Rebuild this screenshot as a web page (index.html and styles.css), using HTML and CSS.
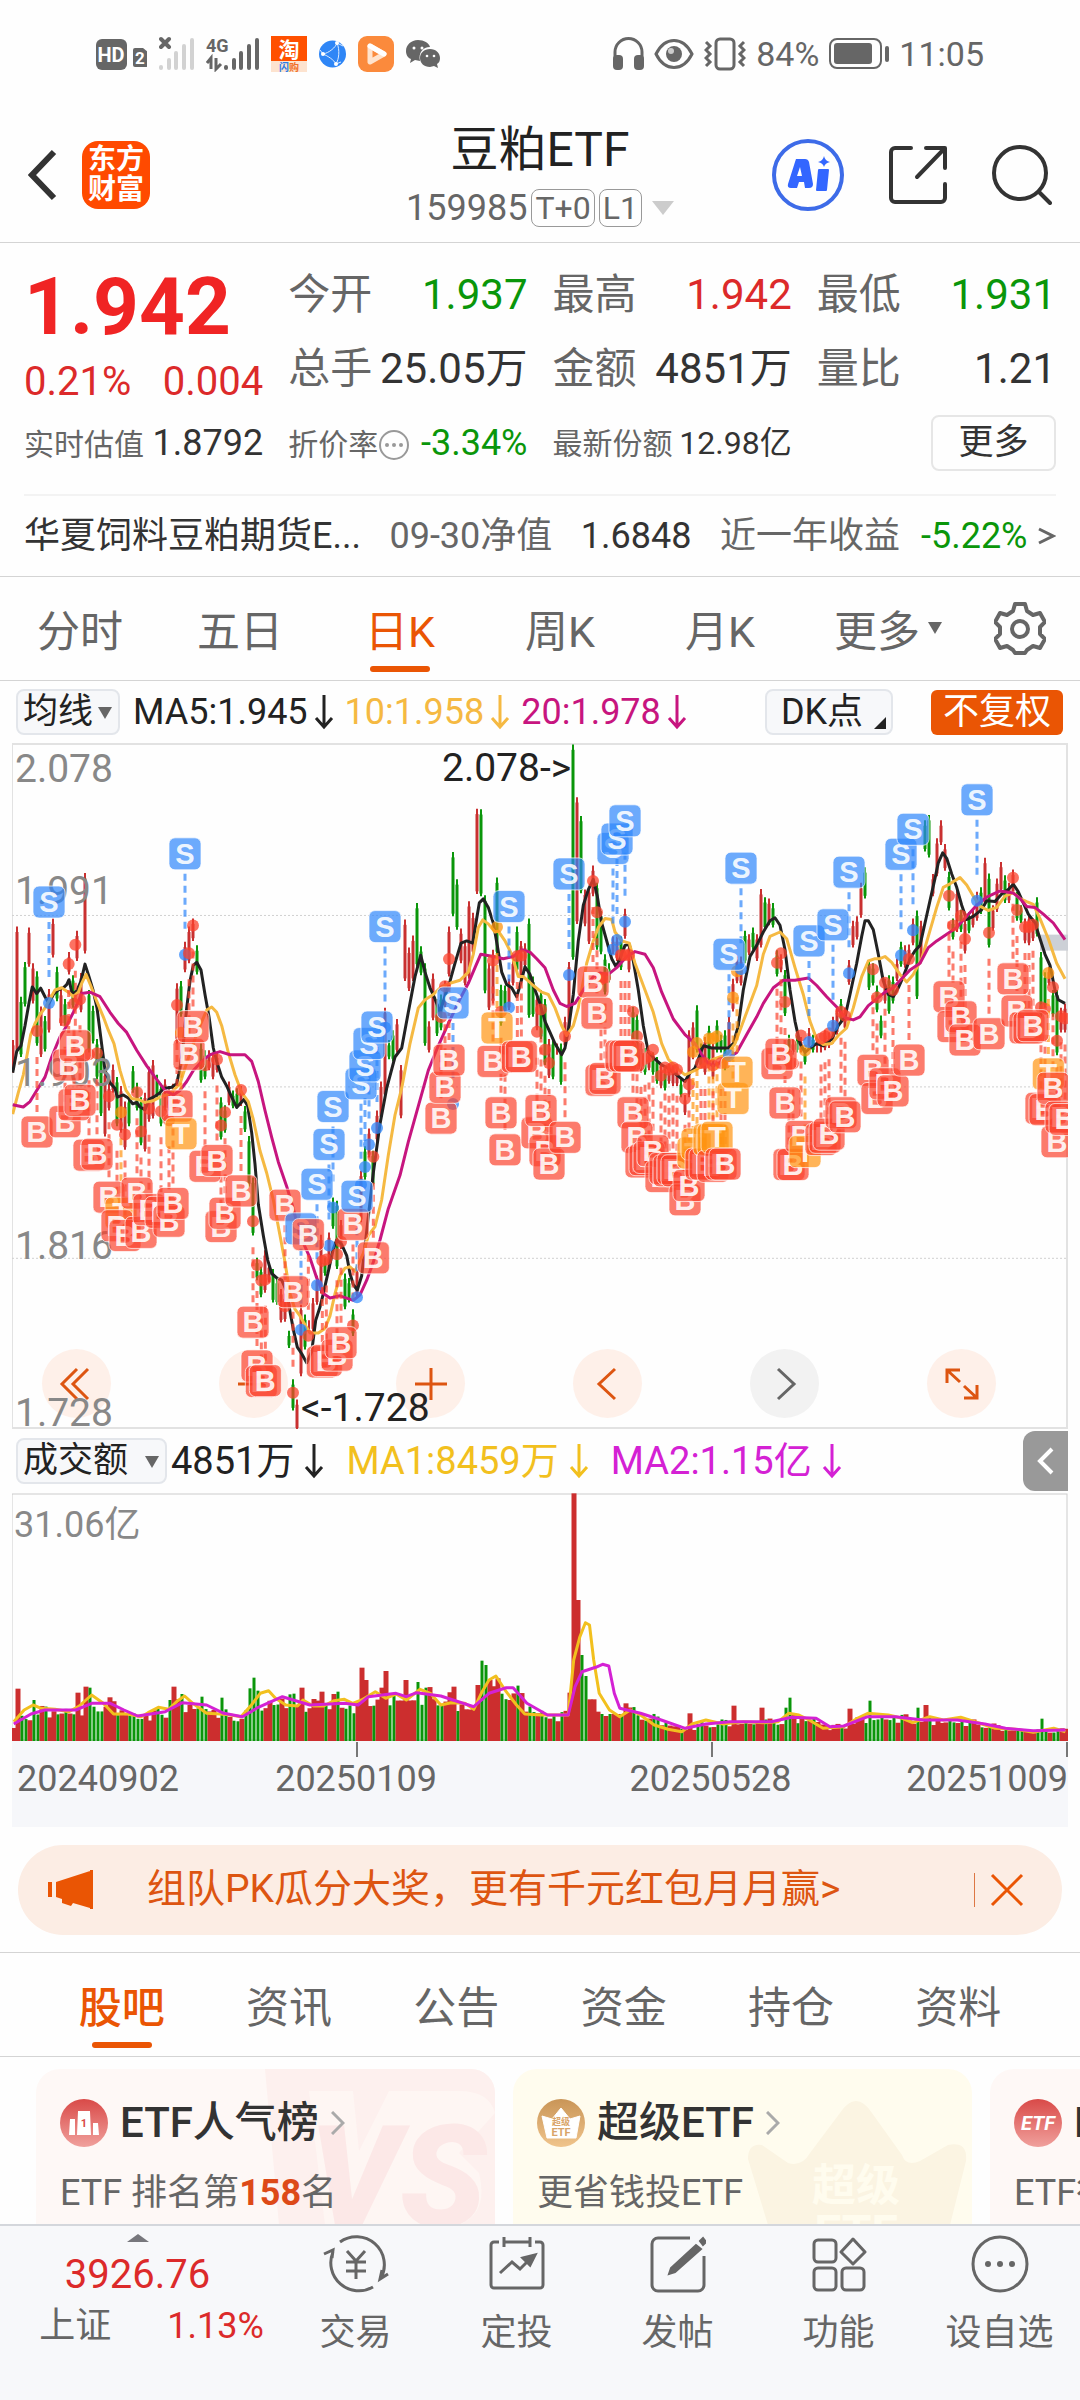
FILE: index.html
```html
<!DOCTYPE html>
<html lang="zh-CN">
<head>
    <meta charset="UTF-8">
    <meta name="viewport" content="width=device-width, initial-scale=1.0">
    <title>豆粕ETF 159985</title>
    <link rel="stylesheet" href="styles.css">
</head>
<body>
<div class="app">
    <div class="status-bar">
        <div class="status-group">
            <svg width="51" height="36" viewBox="0 0 51 36">
                <rect x="0" y="3" width="31" height="31" rx="6" fill="#666"/>
                <text x="15" y="26" text-anchor="middle" class="svg-bold" font-size="20" fill="#fff">HD</text>
                <path d="M37 14a2 2 0 0 1 2-2h8l5 4v13a2 2 0 0 1-2 2H39a2 2 0 0 1-2-2z" fill="#666"/>
                <text x="44" y="28" text-anchor="middle" class="svg-bold" font-size="17" fill="#fff">2</text>
            </svg>
            <svg width="35" height="36" viewBox="0 0 35 36" stroke-linecap="round">
                <path d="M2 3l8 8M10 3l-8 8" stroke="#666" stroke-width="4"/>
                <path d="M2 31v1M10 24v8M17 17v15M25 10v22M33 4v28" stroke="#d2d2d2" stroke-width="4"/>
            </svg>
            <svg width="53" height="36" viewBox="0 0 53 36">
                <text x="0" y="16" class="svg-bold" font-size="18" fill="#666">4G</text>
                <path d="M5 33V22l-4 5M10 22v11l5-5" stroke="#666" stroke-width="3" fill="none"/>
                <path d="M20 31v1M28 24v8M35 17v15M43 10v22M51 4v28" stroke="#666" stroke-width="4" stroke-linecap="round"/>
            </svg>
            <svg width="36" height="36" viewBox="0 0 36 36">
                <rect width="36" height="26" fill="#ff5000"/>
                <rect y="25" width="36" height="11" fill="#fde3cf"/>
                <text x="18" y="21" text-anchor="middle" class="svg-bold" font-size="21" fill="#fff">淘</text>
                <text x="8" y="35" class="svg-bold" font-size="10" fill="#2c7be5">闪</text>
                <text x="18" y="35" class="svg-bold" font-size="10" fill="#f0702a">购</text>
            </svg>
            <svg width="27" height="36" viewBox="0 0 27 36">
                <circle cx="13.500" cy="18" r="13.500" fill="#2f86f6"/>
                <path d="M4 18C10 17 17 11 18 7C21 14 20 23 17 28C15 24 9 20 4 18M18 7l6 3M17 28l5-2M4 18l-3-4" stroke="#dcebff" stroke-width="1" fill="none"/>
                <circle cx="4" cy="18" r="2" fill="#fff"/><circle cx="18" cy="7" r="2" fill="#fff"/><circle cx="17" cy="28" r="2" fill="#fff"/>
            </svg>
            <svg width="36" height="36" viewBox="0 0 36 36">
                <rect width="36" height="36" rx="9" fill="#fb8a3c"/>
                <path d="M12 10l14 8-14 8z" fill="none" stroke="#ffe3cd" stroke-width="5" stroke-linejoin="round"/>
                <path d="M12 10l14 8" stroke="#fff" stroke-width="5" stroke-linecap="round"/>
            </svg>
            <svg width="34" height="36" viewBox="0 0 34 36">
                <path d="M12 4C5 4 0 9 0 15c0 4 2 7 5 8l-1 4 5-3 5 1c-2-8 3-14 10-14C23 7 18 4 12 4z" fill="#666"/>
                <path d="M24 13c-6 0-10 4-10 9s4 9 10 9l4-1 4 2-1-4c2-1 3-3 3-6 0-5-4-9-10-9z" fill="#666"/>
                <g fill="#fff"><circle cx="8" cy="12" r="1.500"/><circle cx="16" cy="12" r="1.500"/><circle cx="21" cy="20" r="1.300"/><circle cx="28" cy="20" r="1.300"/></g>
            </svg>
        </div>
        <div class="status-group status-right">
            <svg width="31" height="36" viewBox="0 0 31 36">
                <path d="M2 26V16a13 13 0 0 1 27 0v10" stroke="#666" stroke-width="3" fill="none"/>
                <rect x="0" y="19" width="10" height="15" rx="4" fill="#666"/><rect x="21" y="19" width="10" height="15" rx="4" fill="#666"/>
            </svg>
            <svg width="40" height="36" viewBox="0 0 40 36">
                <path d="M2 18C11 0 29 0 38 18C29 36 11 36 2 18z" fill="none" stroke="#666" stroke-width="3"/>
                <circle cx="20" cy="18" r="8" fill="#666"/><circle cx="17" cy="15" r="3" fill="#ccc"/>
            </svg>
            <svg width="42" height="36" viewBox="0 0 42 36" fill="none" stroke="#666" stroke-width="3">
                <rect x="12" y="3" width="18" height="30" rx="4"/>
                <path d="M2 6l4 4-4 4 4 4-4 4 4 4-4 4M40 6l-4 4 4 4-4 4 4 4-4 4 4 4"/>
            </svg>
            <span>84%</span>
            <svg width="60" height="36" viewBox="0 0 60 36">
                <rect x="1" y="3" width="51" height="29" rx="7" fill="none" stroke="#666" stroke-width="2"/>
                <rect x="5" y="7" width="38" height="21" rx="3" fill="#666"/>
                <rect x="56" y="10" width="4" height="16" rx="2" fill="#666"/>
            </svg>
            <span>11:05</span>
        </div>
    </div>

    <header class="header">
        <div class="header-left">
            <button class="icon-btn" aria-label="返回">
                <svg width="30" height="52" viewBox="0 0 30 52"><path d="M26 3L4 26l22 23" fill="none" stroke="#333" stroke-width="6"/></svg>
            </button>
            <div class="brand"><span>东方</span><span>财富</span></div>
        </div>
        <div class="title-block">
            <h1>豆粕ETF</h1>
            <div class="sub-title">
                <span>159985</span><span class="tag">T+0</span><span class="tag">L1</span>
                <svg class="sub-arrow" width="22" height="14" viewBox="0 0 22 14"><path d="M0 0h22L11 14z" fill="#ccc"/></svg>
            </div>
        </div>
        <div class="header-right">
            <button class="icon-btn" aria-label="AI">
                <svg width="72" height="72" viewBox="0 0 72 72">
                    <circle cx="36" cy="36" r="34" fill="none" stroke="#3d6be8" stroke-width="4"/>
                    <path d="M24 20h9q3 0 4 3l4 22q0 4-4 4h-4l-1-6h-5l-2 6h-6q-4 0-3-4l7-22q1-3 1-3zM28 28l-3 9h5z" fill="#3366ff" fill-rule="evenodd"/>
                    <path d="M47 31h9l-2 20h-9z" fill="#3366ff" stroke="#3366ff" stroke-width="2" stroke-linejoin="round"/>
                    <path d="M52 17q1 5 6 6q-5 1-6 5q-1-4-6-5q5-1 6-6z" fill="#3366ff"/>
                </svg>
            </button>
            <button class="icon-btn" aria-label="分享">
                <svg width="58" height="58" viewBox="0 0 58 58" fill="none" stroke="#333" stroke-width="4" stroke-linecap="round" stroke-linejoin="round">
                    <path d="M22 2H6a4 4 0 0 0-4 4v46a4 4 0 0 0 4 4h46a4 4 0 0 0 4-4V38M37 2h19v20M55 3L28 31"/>
                </svg>
            </button>
            <button class="icon-btn" aria-label="搜索">
                <svg width="60" height="60" viewBox="0 0 60 60" fill="none" stroke="#333" stroke-width="4" stroke-linecap="round">
                    <circle cx="28" cy="28" r="26"/><path d="M47 47l11 11"/>
                </svg>
            </button>
        </div>
    </header>

    <section class="quote">
        <div class="price-block">
            <div class="price">1.942</div>
            <div class="change"><span>0.21%</span><span>0.004</span></div>
        </div>
        <div class="cell"><span>今开</span><b class="down">1.937</b></div>
        <div class="cell"><span>最高</span><b class="up">1.942</b></div>
        <div class="cell"><span>最低</span><b class="down">1.931</b></div>
        <div class="cell"><span>总手</span><b>25.05万</b></div>
        <div class="cell"><span>金额</span><b>4851万</b></div>
        <div class="cell"><span>量比</span><b>1.21</b></div>
        <div class="cell small"><span>实时估值</span><b>1.8792</b></div>
        <div class="cell small">
            <span class="discount">折价率
                <svg width="32" height="32" viewBox="0 0 32 32"><circle cx="16" cy="16" r="14" fill="none" stroke="#999" stroke-width="2"/><g fill="#999"><circle cx="9" cy="16" r="2"/><circle cx="16" cy="16" r="2"/><circle cx="23" cy="16" r="2"/></g></svg>
            </span><b class="down">-3.34%</b>
        </div>
        <div class="cell small"><span>最新份额</span><b class="share">12.98亿</b></div>
        <div class="cell end"><button class="more-btn">更多</button></div>
    </section>
    <a class="fund" href="#fund">
        <span>华夏饲料豆粕期货E...</span>
        <span class="muted">09-30净值</span>
        <span>1.6848</span>
        <span class="fund-year">
            <span class="muted">近一年收益</span>
            <span class="down">-5.22%</span>
        </span>
        <svg class="fund-arrow" width="18" height="20" viewBox="0 0 18 20"><path d="M1 3l14 7-14 7" fill="none" stroke="#666" stroke-width="3"/></svg>
    </a>

    <nav class="period-tabs">
        <button>分时</button>
        <button>五日</button>
        <button class="active">日K</button>
        <button>周K</button>
        <button>月K</button>
        <button class="more-tab">更多<i class="caret"></i></button>
        <button aria-label="设置">
            <svg width="52" height="54" viewBox="0 0 52 54" fill="none" stroke="#666" stroke-width="4" stroke-linejoin="round">
                <path d="M21 3h10l2 7 6 4 7-2 5 9-5 5v7l5 5-5 9-7-2-6 4-2 3H21l-2-3-6-4-7 2-5-9 5-5v-7l-5-5 5-9 7 2 6-4z"/>
                <circle cx="26" cy="28" r="8"/>
            </svg>
        </button>
    </nav>

    <main class="chart-area">
        <div class="toolbar ma-bar">
            <label class="picker"><select aria-label="指标"><option>均线</option></select></label>
            <span class="ma">MA5:1.945<svg class="arrow" viewBox="0 0 20 36"><path d="M10 1v31M2 24l8 9 8-9"/></svg></span>
            <span class="ma ma10">10:1.958<svg class="arrow" viewBox="0 0 20 36"><path d="M10 1v31M2 24l8 9 8-9"/></svg></span>
            <span class="ma ma20">20:1.978<svg class="arrow" viewBox="0 0 20 36"><path d="M10 1v31M2 24l8 9 8-9"/></svg></span>
            <button class="dk-btn">DK点<i></i></button>
            <button class="adjust-btn">不复权</button>
        </div>
        <div class="kline">
            <div class="kline-tools">
                <button aria-label="快退"><svg viewBox="0 0 36 36"><path d="M18 3L3 18l15 15M29 3L14 18l15 15"/></svg></button>
                <button aria-label="缩小"><svg viewBox="0 0 36 36"><path d="M2 18h32"/></svg></button>
                <button aria-label="放大"><svg viewBox="0 0 36 36"><path d="M2 18h32M18 2v32"/></svg></button>
                <button aria-label="左移"><svg viewBox="0 0 36 36"><path d="M25 3L9 18l16 15"/></svg></button>
                <button class="off" aria-label="右移"><svg viewBox="0 0 36 36"><path d="M11 3l16 15-16 15"/></svg></button>
                <button aria-label="全屏"><svg viewBox="0 0 36 36"><path d="M16 4H3v13M3 4l13 12M20 32h13V19M33 32L20 20"/></svg></button>
            </div>
            <svg id="kline" class="kline-svg" viewBox="0 0 1056 686"></svg>
        </div>
        <div class="toolbar vol-bar">
            <label class="picker"><select aria-label="副图"><option>成交额</option></select></label>
            <span class="ma">4851万<svg class="arrow" viewBox="0 0 20 36"><path d="M10 1v31M2 24l8 9 8-9"/></svg></span>
            <span class="ma ma1">MA1:8459万<svg class="arrow" viewBox="0 0 20 36"><path d="M10 1v31M2 24l8 9 8-9"/></svg></span>
            <span class="ma ma2">MA2:1.15亿<svg class="arrow" viewBox="0 0 20 36"><path d="M10 1v31M2 24l8 9 8-9"/></svg></span>
            <button class="fold-btn" aria-label="展开"><svg width="18" height="28" viewBox="0 0 18 28"><path d="M15 2L3 14l12 12" fill="none" stroke="#fff" stroke-width="4"/></svg></button>
        </div>
        <svg id="volume" class="volume-svg" viewBox="0 0 1056 248"></svg>
        <div class="axis">
            <span>20240902</span>
            <span>20250109</span>
            <span>20250528</span>
            <span>20251009</span>
        </div>
    </main>

    <div class="banner">
        <svg width="46" height="40" viewBox="0 0 46 40" fill="#ea5504"><path d="M0 12h4v15H0zM8 12L42 1v37l-17-5-2 3-9-3v-4l-6-2zM42 0h3v39h-3z"/></svg>
        <a href="#event">组队PK瓜分大奖，更有千元红包月月赢&gt;</a>
        <button class="icon-btn banner-close" aria-label="关闭"><svg width="34" height="34" viewBox="0 0 34 34"><path d="M2 2l30 30M32 2L2 32" stroke="#ea5504" stroke-width="3"/></svg></button>
    </div>

    <nav class="info-tabs">
        <button class="active">股吧</button>
        <button>资讯</button>
        <button>公告</button>
        <button>资金</button>
        <button>持仓</button>
        <button>资料</button>
    </nav>

    <section class="cards">
        <article class="card rank">
            <svg class="card-art" viewBox="0 0 230 156">
                <path d="M0 0h230v156H14z" fill="#fdf0ee"/>
                <path d="M44 22h44l6 60 30-60h70q30 0 36 22l-36 40 20 20q10 40-20 52H60z" fill="#fef6f3"/>
                <text x="44" y="158" class="svg-vs" font-size="142" fill="#fce8e7">VS</text>
            </svg>
            <h2>
                <svg width="48" height="48" viewBox="0 0 48 48">
                    <defs><linearGradient id="redGrad" x1="0" y1="0" x2="0" y2="1"><stop offset="0" stop-color="#d94a48"/><stop offset="1" stop-color="#f0a09c"/></linearGradient></defs>
                    <circle cx="24" cy="24" r="24" fill="url(#redGrad)"/>
                    <path d="M10 20h5v16H9zM18 12h12l1 24H17zM33 24h5l1 12h-6z" fill="#fff"/>
                    <text x="24" y="28" text-anchor="middle" class="svg-bold" font-size="11" fill="#d94a48">1</text>
                </svg>
                <a href="#rank">ETF人气榜</a>
                <svg width="14" height="24" viewBox="0 0 14 24"><path d="M1 1l11 11L1 23" fill="none" stroke="#aaa" stroke-width="3"/></svg>
            </h2>
            <p>ETF 排名第<strong>158</strong>名</p>
        </article>
        <article class="card super">
            <svg class="card-art" viewBox="0 0 230 156">
                <path d="M6 90Q6 74 20 76L46 94Q60 98 68 84L98 44Q114 20 130 44L160 86Q164 98 178 92L206 76Q226 72 224 92L208 156H26z" fill="#fbf4e2"/>
                <text x="114" y="132" text-anchor="middle" class="svg-bold" font-size="44" fill="#fffcee">超级</text>
                <text x="114" y="180" text-anchor="middle" class="svg-bold" font-size="48" fill="#fffcee">ETF</text>
            </svg>
            <h2>
                <svg width="48" height="48" viewBox="0 0 48 48">
                    <defs><linearGradient id="goldGrad" x1="0" y1="0" x2="0" y2="1"><stop offset="0" stop-color="#c99557"/><stop offset="1" stop-color="#f0c48c"/></linearGradient></defs>
                    <circle cx="24" cy="24" r="24" fill="url(#goldGrad)"/>
                    <path d="M5 17l10 3 9-11 9 11 10-3-4 22H10z" fill="#fff" stroke="#fff" stroke-linejoin="round"/>
                    <text x="24" y="26" text-anchor="middle" class="svg-bold" font-size="9" fill="#d9a468">超级</text>
                    <text x="24" y="37" text-anchor="middle" class="svg-bold" font-size="11" fill="#d9a468">ETF</text>
                </svg>
                <a href="#super">超级ETF</a>
                <svg width="14" height="24" viewBox="0 0 14 24"><path d="M1 1l11 11L1 23" fill="none" stroke="#aaa" stroke-width="3"/></svg>
            </h2>
            <p>更省钱投ETF</p>
        </article>
        <article class="card rank">
            <h2>
                <svg width="48" height="48" viewBox="0 0 48 48">
                    <circle cx="24" cy="24" r="24" fill="url(#redGrad)"/>
                    <text x="24" y="31" text-anchor="middle" class="svg-bold svg-italic" font-size="20" fill="#fff">ETF</text>
                </svg>
                <a href="#market">ETF行情</a>
            </h2>
            <p>ETF行情</p>
        </article>
    </section>

    <footer class="bottom-nav">
        <a class="index" href="#index">
            <svg width="22" height="8" viewBox="0 0 22 8"><path d="M0 8L11 0l11 8z" fill="#77777c"/></svg>
            <span class="index-value up">3926.76</span>
            <span class="index-row"><span>上证</span><span class="up">1.13%</span></span>
        </a>
        <a href="#trade">
            <svg width="66" height="60" viewBox="0 0 66 60" fill="none" stroke="#666" stroke-width="3">
                <path d="M17 8A28 28 0 0 1 58 44M50 53A28 28 0 0 1 10 18M1 20l9-4-1 8M65 40l-8 5 2-9"/>
                <path d="M24 17l9 10 9-10M23 28h20M23 37h20M33 27v18"/>
            </svg>
            <span>交易</span>
        </a>
        <a href="#invest">
            <svg width="56" height="60" viewBox="0 0 56 60" fill="none" stroke="#666" stroke-width="3">
                <path d="M10 8H5a3 3 0 0 0-3 3v40a3 3 0 0 0 3 3h46a3 3 0 0 0 3-3V11a3 3 0 0 0-3-3h-5M15 3v10M41 3v10M15 8h26M11 39l12-11 8 7 13-13"/>
                <path d="M34 24l12-3-5 10z" fill="#666"/>
            </svg>
            <span>定投</span>
        </a>
        <a href="#post">
            <svg width="56" height="60" viewBox="0 0 56 60" fill="none" stroke="#666" stroke-width="3">
                <path d="M40 4H8a6 6 0 0 0-6 6v41a6 6 0 0 0 6 6h40a6 6 0 0 0 6-6V22"/>
                <path d="M46 11l5 4-26 23-6 2 2-6zM50 7l3-3 3 4-3 3z" fill="#666" stroke-width="2"/>
            </svg>
            <span>发帖</span>
        </a>
        <a href="#features">
            <svg width="56" height="60" viewBox="0 0 56 60" fill="none" stroke="#666" stroke-width="3">
                <rect x="3" y="6" width="22" height="22" rx="4"/><rect x="3" y="34" width="22" height="22" rx="4"/><rect x="31" y="34" width="22" height="22" rx="4"/>
                <path d="M42 5l12 13-12 12-12-12z" stroke-linejoin="round"/>
            </svg>
            <span>功能</span>
        </a>
        <a href="#watch">
            <svg width="58" height="60" viewBox="0 0 58 60">
                <circle cx="29" cy="30" r="27" fill="none" stroke="#666" stroke-width="3"/>
                <g fill="#666"><circle cx="17" cy="30" r="3"/><circle cx="29" cy="30" r="3"/><circle cx="41" cy="30" r="3"/></g>
            </svg>
            <span>设自选</span>
        </a>
    </footer>
</div>
<script src="chart.js"></script>
</body>
</html>
```

FILE: styles.css
```css
* {
    box-sizing: border-box;
}
body {
    margin: 0;
    background: #fefefe;
    color: #333;
    font-family: Roboto, "Noto Sans CJK SC", sans-serif;
    font-size: 36px;
}
button, select {
    margin: 0;
    padding: 0;
    border: none;
    background: none;
    color: inherit;
    font: inherit;
    cursor: pointer;
}
a {
    color: inherit;
    text-decoration: none;
}
svg {
    display: block;
    flex: none;
}
.app {
    display: flex;
    flex-direction: column;
    height: 100vh;
    overflow: hidden;
}
.app > * {
    flex: none;
}
.svg-bold {
    font-weight: 700;
}
.svg-italic {
    font-style: italic;
}
.svg-vs {
    font-weight: 900;
    font-style: italic;
}
.up {
    color: #dc2a2a;
}
.down {
    color: #0a960a;
}
.muted {
    color: #666;
}

/* status bar */
.status-bar {
    display: flex;
    justify-content: space-between;
    height: 108px;
    padding: 0 96px;
    color: #666;
    font-size: 34px;
}
.status-group {
    display: flex;
    align-items: center;
    gap: 12px;
}
.status-right {
    gap: 10px;
}

/* header */
.header {
    display: grid;
    grid-template-columns: 1fr auto 1fr;
    align-items: center;
    height: 135px;
    padding: 0 28px;
    border-bottom: 1px solid #d4d4d4;
}
.header-left {
    display: flex;
    align-items: center;
    gap: 24px;
}
.header-right {
    display: flex;
    align-items: center;
    justify-content: flex-end;
    gap: 45px;
}
.brand {
    display: flex;
    flex-direction: column;
    align-items: center;
    padding: 4px 6px;
    border-radius: 16px;
    background: #ff4a00;
    color: #fff;
    font-size: 28px;
    font-weight: 700;
    line-height: 30px;
}
.title-block {
    display: flex;
    flex-direction: column;
    align-items: center;
    gap: 10px;
}
.title-block h1 {
    margin: 0;
    color: #222;
    font-size: 48px;
    font-weight: 400;
    line-height: 56px;
}
.sub-title {
    display: flex;
    align-items: center;
    gap: 4px;
    color: #666;
    line-height: 40px;
}
.tag {
    padding: 0 3px;
    border: 1px solid #999;
    border-radius: 8px;
    font-size: 32px;
    line-height: 36px;
}
.sub-arrow {
    margin-left: 6px;
}

/* quote */
.quote {
    display: grid;
    grid-template-columns: repeat(4, 1fr);
    grid-auto-rows: 74px;
    column-gap: 25px;
    margin: 0 24px;
    padding: 15px 0 14px;
}
.price-block {
    grid-row: span 2;
    padding-top: 6px;
}
.price {
    color: #f02424;
    font-size: 80px;
    font-weight: 700;
    line-height: 86px;
}
.change {
    display: flex;
    justify-content: space-between;
    margin-top: 12px;
    color: #dc2a2a;
    font-size: 40px;
    line-height: 40px;
}
.cell {
    display: flex;
    align-items: baseline;
    justify-content: space-between;
    color: #666;
    font-size: 42px;
    line-height: 74px;
    white-space: nowrap;
}
.cell b {
    color: #333;
    font-weight: 400;
}
.cell b.up {
    color: #dc2a2a;
}
.cell b.down {
    color: #0a960a;
}
.cell.small {
    font-size: 30px;
}
.cell.small b {
    font-size: 36px;
}
.cell.small b.share {
    font-size: 32px;
}
.cell .discount {
    display: flex;
    align-items: center;
}
.cell.end {
    align-items: center;
    justify-content: flex-end;
}
.more-btn {
    width: 125px;
    height: 56px;
    border: 2px solid #e6e6e6;
    border-radius: 8px;
    color: #333;
    font-size: 35px;
    line-height: 48px;
}
.fund {
    display: flex;
    align-items: center;
    justify-content: space-between;
    height: 82px;
    margin: 0 24px;
    border-top: 2px solid #f3f3f3;
    line-height: 72px;
    white-space: nowrap;
}
.fund-year {
    display: flex;
    gap: 21px;
}
.fund-arrow {
    margin-left: -18px;
}

/* tabs */
.period-tabs {
    display: grid;
    grid-template-columns: repeat(6, 4fr) 3fr;
    height: 105px;
    border-top: 1px solid #d4d4d4;
    border-bottom: 1px solid #d4d4d4;
    color: #666;
    font-size: 43px;
}
.period-tabs button, .info-tabs button {
    position: relative;
    display: flex;
    align-items: center;
    justify-content: center;
    padding-bottom: 2px;
}
.period-tabs .more-tab {
    padding-left: 16px;
}
.active {
    color: #ea5504;
}
.active::after {
    content: "";
    position: absolute;
    bottom: 8px;
    width: 60px;
    height: 6px;
    border-radius: 3px;
    background: #ea5504;
}
.caret {
    margin-left: 8px;
    border: 7px solid transparent;
    border-top: 12px solid #666;
    border-bottom: none;
}

/* chart */
.chart-area {
    margin: 0 12px;
}
.toolbar {
    display: flex;
    align-items: center;
    padding-left: 4px;
    color: #222;
    line-height: 44px;
    white-space: nowrap;
}
.ma-bar {
    height: 62px;
    padding-right: 5px;
}
.vol-bar {
    height: 64px;
    font-size: 38px;
}
.picker {
    position: relative;
    margin-right: 13px;
    border: 2px solid #e3e6eb;
    border-radius: 8px;
    background: #f7f8fa;
    font-size: 35px;
}
.picker select {
    display: block;
    height: 42px;
    padding: 0 24px 0 5px;
    appearance: none;
    line-height: 42px;
}
.picker::after {
    content: "";
    position: absolute;
    right: 6px;
    top: 16px;
    border: 7px solid transparent;
    border-top: 12px solid #666;
    border-bottom: none;
    pointer-events: none;
}
.vol-bar .picker {
    margin-right: 4px;
}
.vol-bar .picker select {
    padding-right: 36px;
}
.ma {
    display: flex;
    align-items: center;
    gap: 6px;
    margin-right: 11px;
}
.vol-bar .ma {
    gap: 10px;
    margin-right: 22px;
}
.arrow {
    width: 20px;
    height: 36px;
    fill: none;
    stroke: currentColor;
    stroke-width: 3;
}
.ma10 {
    color: #f5b942;
}
.ma20 {
    color: #c7157f;
}
.ma1 {
    color: #f2c01e;
}
.ma2 {
    color: #d421d4;
}
.dk-btn {
    position: relative;
    width: 128px;
    margin-left: auto;
    padding-right: 14px;
    border: 2px solid #e3e6eb;
    border-radius: 8px;
    background: #f7f8fa;
    line-height: 42px;
}
.dk-btn i {
    position: absolute;
    right: 5px;
    bottom: 4px;
    border-left: 12px solid transparent;
    border-bottom: 12px solid #222;
}
.adjust-btn {
    width: 132px;
    margin-left: 38px;
    border-radius: 6px;
    background: #ea5504;
    color: #fff;
    line-height: 45px;
}
.kline {
    position: relative;
}
.kline-svg {
    position: relative;
    width: 100%;
    pointer-events: none;
}
.kline-tools {
    position: absolute;
    left: 30px;
    right: 72px;
    bottom: 11px;
    display: flex;
    justify-content: space-between;
}
.kline-tools button {
    display: flex;
    align-items: center;
    justify-content: center;
    width: 69px;
    height: 69px;
    border-radius: 50%;
    background: #fef0e9;
}
.kline-tools svg {
    width: 36px;
    height: 36px;
    fill: none;
    stroke: #dd5511;
    stroke-width: 3;
}
.kline-tools .off {
    background: #f2f2f2;
}
.kline-tools .off svg {
    stroke: #666;
}
.fold-btn {
    display: flex;
    align-items: center;
    justify-content: center;
    width: 45px;
    height: 60px;
    margin-left: auto;
    border-radius: 12px 0 0 12px;
    background: #999;
}
.volume-svg {
    width: 100%;
}
.grid-label {
    font-size: 39px;
    fill: #888;
}
.volume-label {
    font-size: 36px;
    fill: #888;
}
.peak-label {
    font-size: 39px;
    fill: #222;
}
.badge {
    font-family: "Liberation Sans", sans-serif;
    font-size: 29px;
    font-weight: 700;
    fill: #fff;
    fill-opacity: 0.9;
    text-anchor: middle;
}
.axis {
    display: grid;
    grid-template-columns: 163fr 356fr 356fr 181fr;
    height: 86px;
    padding-top: 17px;
    background: #f6f7fa;
    color: #666;
    line-height: 42px;
}
.axis span:first-child {
    padding-left: 5px;
}
.axis span {
    position: relative;
    white-space: nowrap;
}
.axis span:nth-child(2), .axis span:nth-child(3) {
    text-align: center;
}
.axis span:last-child {
    text-align: right;
}
.axis span:not(:first-child)::before {
    content: "";
    position: absolute;
    top: -16px;
    left: 50%;
    width: 2px;
    height: 15px;
    background: #777;
}
.axis span:last-child::before {
    right: 0;
    left: auto;
}

/* banner */
.banner {
    display: flex;
    align-items: center;
    height: 90px;
    margin: 18px 18px 17px;
    padding: 0 38px 0 30px;
    border-radius: 45px;
    background: #fcede4;
    color: #dd5511;
    font-size: 39px;
}
.banner a {
    flex: 1;
    margin-left: 53px;
    line-height: 60px;
    padding-bottom: 3px;
    white-space: nowrap;
}
.banner-close {
    padding-left: 15px;
    border-left: 1px solid #dd7744;
}

.info-tabs {
    display: grid;
    grid-template-columns: repeat(6, 1fr);
    height: 105px;
    padding: 0 38px;
    border-top: 1px solid #d4d4d4;
    border-bottom: 1px solid #d4d4d4;
    color: #666;
    font-size: 43px;
}
.info-tabs .active {
    font-weight: 500;
}

/* cards */
.app > .cards {
    display: grid;
    flex: 1;
    grid-template-columns: repeat(3, 459px);
    gap: 18px;
    min-height: 0;
    padding: 12px 0 0 36px;
    overflow: hidden;
}
.card {
    position: relative;
    padding: 26px 24px 0;
    border-radius: 24px 24px 0 0;
    overflow: hidden;
}
.card.rank {
    background: #fef8f6;
}
.card.super {
    background: #fffcee;
}
.card-art {
    position: absolute;
    top: 0;
    right: 0;
    width: 230px;
}
.card h2 {
    position: relative;
    display: flex;
    align-items: center;
    gap: 12px;
    margin: 0;
    font-size: 42px;
    font-weight: 500;
    line-height: 56px;
}
.card p {
    position: relative;
    margin: 18px 0 0;
    color: #666;
    font-size: 36px;
    line-height: 48px;
    white-space: nowrap;
}
.card strong {
    color: #dd4a18;
}

/* bottom nav */
.bottom-nav {
    display: grid;
    grid-template-columns: 275fr repeat(5, 161fr);
    height: 176px;
    border-top: 2px solid #d4d7dc;
    background: #f7f8fa;
    color: #666;
}
.bottom-nav a {
    display: flex;
    flex-direction: column;
    align-items: center;
    gap: 13px;
    padding-top: 8px;
    line-height: 52px;
}
.bottom-nav .index {
    gap: 0;
}
.index-value {
    font-size: 40px;
    line-height: 66px;
}
.index-row {
    display: flex;
    gap: 56px;
    padding-left: 28px;
    line-height: 36px;
}
```

FILE: chart.js
```js
// Days are 12 units apart. Series are stored in three panes of 1080 units each.
const PANE = 1080;
const px = x => x / 3 - 12;
const py = y => y / 2.24 - 3;

// colour, high, low of every day
const days = `
r672-745 r418-700 g575-710 g497-597 r420-508 r500-590 g518-685 r597-710 g618-698 r558-655
r400-487 g508-585 r560-640 g580-640 r475-525 g527-600 r427-495 r522-610 r298-478 g560-700
g595-680 g670-760 g690-842 r740-888 r770-830 r727-790 g755-865 r775-880 r810-918 g800-865
g730-790 g768-830 g800-908 r790-922 r732-855 r717-848 g750-800 g770-865 r760-830 r775-830
r770-800 r545-680 g540-620 r452-520 r418-500 r400-450 g460-525 g680-768 g695-760 r695-740
r700-760 r700-745 g800-895 g818-880 r765-818 g785-825 g780-825 r775-820 g820-878 g887-1000
g980-1110 g1160-1210 g1180-1248 r1143-1238 r1170-1215 g1185-1260 g1205-1265 r1230-1305 r1240-1303 g1323-1362
g1432-1502 r1477-1547 r1265-1425 g1287-1365 r1300-1325 r1250-1325 r1200-1265 r1108-1240 g1160-1200 r1103-1190
g1025-1095 g1032-1185 r1075-1140 g1195-1275 g1205-1260 g1275-1335 r1180-1250
r965-1080 g910-985 r870-935 g920-1000 r830-900 r765-850 r600-800 g672-715 g650-720 r625-700
r728-847 r402-540 r465-562 r438-540 g365-508 g462-527 g500-685 r630-700 r523-628 g580-663
g570-650 r540-600 r418-530 g251-395 g312-425 r422-500 r450-550 r361-535 r387-480 r154-345
g155-350 g348-567 r500-605 r470-590 g308-480 g548-640 g550-610 r535-605 r490-550 g418-520
r450-540 r455-510 g400-622 g530-620 r570-650 g560-670 g580-728 r670-757 g670-760 r680-705
g680-772 r620-690 r497-650 g10-492 r128-412 g170-343 r335-417 r330-457 r281-350 g320-470
g383-480 g480-570 g500-543 r440-480 r440-495 g440-515 r378-445 r455-520 g598-680 g615-720
r680-745 g690-750 r695-740 g700-750 g710-770 r730-780 g735-785 r725-770 r730-775 r735-775
g760-800 r795-840 r650-800 r632-715 g594-700 g680-735 r665-750 g640-720 r680-760 g628-700
g660-700 g650-740 r620-700 r535-608 r485-545 r485-550 g427-500 r435-482 g420-470 r435-495
r334-465 g352-425 r355-415 g365-420 g471-530 r480-520 g515-618 g660-700 r670-705 g662-700
r665-700 g690-727 r645-690 g660-700 r675-700 r680-700 r650-695 r655-690 r620-680 r600-660
g580-630 r600-650 r493-548 r405-465 r395-447 r320-398 g285-355 g495-560 g500-550 g550-610
g617-668 r535-590 g527-613 g530-590 r490-540 g452-508 r460-510 r458-500 r400-460 g382-580
r405-500 g180-250 g168-263 r300-350 r220-305 r180-235 r233-293 g295-382 g400-447 r333-430
g380-430 r400-478 g385-433 r380-420 r340-405 g330-390 r264-370 g299-465 r370-427 r310-385
r273-340 g303-365 r320-365 r290-345 g340-405 g370-410 r400-455 r390-460 r400-450 g352-440
g475-620 g520-600 r508-550 g560-620 g560-706 r600-655 r590-655`.trim().split(/\s+/);

const ma5 = [
    '38,745 50,697 63,685 75,640 88,585 97,553 110,568 122,556 135,575 147,590 160,570 175,560 190,555 200,548 207,537 217,570 230,562 243,540 255,502 267,530 279,560 291,600 303,670 315,740 330,768 345,780 352,800 370,795 385,802 398,815 410,812 420,822 435,828 447,805 465,798 480,790 495,780 515,778 530,770 540,735 550,680 560,600 570,540 580,505 590,498 603,515 615,570 627,620 640,690 650,720 665,755 680,775 695,800 710,823 720,815 732,805 743,820 755,880 765,950 775,1040 790,1110 803,1165 815,1195 830,1205 845,1210 860,1235 870,1280 880,1320 892,1360 905,1375 920,1395 935,1370 947,1300 960,1270 970,1240 985,1190 1000,1140 1010,1120 1025,1130 1040,1155 1050,1195 1060,1220 1072,1232',
    '5,1200 20,1100 40,970 60,860 80,780 105,710 125,690 145,610 165,530 182,482 195,520 210,555 225,580 240,610 250,585 270,540 285,500 303,455 320,450 338,455 350,400 358,365 370,356 385,375 400,410 412,460 425,520 440,548 455,555 470,575 480,550 495,508 510,525 525,560 540,590 555,630 570,655 585,680 605,705 615,690 625,650 640,570 655,450 670,370 685,335 700,312 712,350 725,410 740,450 755,490 768,508 780,490 795,460 808,458 820,495 835,560 850,640 865,700 885,715 905,728 925,735 950,750 975,765 990,745 1005,735 1030,685 1055,690',
    '5,690 25,690 40,680 55,640 70,560 90,485 110,460 130,430 150,405 165,398 180,415 195,470 210,560 225,630 240,680 255,700 270,690 290,680 310,685 335,670 355,640 375,620 390,570 410,500 425,440 435,405 445,405 460,425 475,480 490,540 505,570 520,575 535,555 550,530 570,490 585,472 600,460 615,410 630,360 645,310 655,275 668,253 680,265 695,300 710,330 725,370 740,402 760,395 785,380 800,360 825,362 845,345 865,335 880,323 895,340 910,365 925,390 945,410 960,445 975,480 990,505 1005,560 1015,582 1035,590'
];
const ma10 = [
    '38,838 55,790 70,750 80,710 92,660 105,635 120,615 135,600 150,580 165,560 185,555 205,565 220,575 235,565 245,545 258,525 272,550 290,585 310,620 325,650 342,680 360,740 378,785 395,803 415,805 435,812 460,808 480,800 500,795 520,785 540,770 555,735 575,690 600,640 620,605 635,598 650,610 665,640 685,700 705,750 725,790 745,810 760,850 780,920 800,970 820,1030 840,1110 855,1170 870,1240 885,1275 900,1290 915,1310 930,1328 955,1328 975,1318 990,1290 1005,1240 1020,1200 1035,1183 1050,1180 1065,1190',
    '10,1150 25,1110 45,1090 65,1030 85,930 105,840 125,780 150,680 175,600 195,582 220,570 245,552 270,545 300,538 325,520 340,480 355,420 368,403 385,412 405,430 415,428 435,450 455,480 475,530 490,530 520,550 545,565 565,570 585,600 605,640 620,662 640,640 655,600 680,500 700,450 715,420 735,400 755,402 765,430 785,450 808,455 825,500 850,550 880,610 905,680 925,715 950,735 975,750 1005,740 1035,725 1060,715',
    '0,710 20,705 45,680 65,640 90,590 110,550 130,480 150,440 180,430 200,445 225,510 250,570 270,630 290,670 310,682 335,680 355,662 380,645 400,600 425,530 445,495 465,490 480,490 495,485 515,498 540,525 560,542 580,525 605,490 625,440 650,375 670,330 690,322 720,308 740,325 760,350 780,372 805,382 830,375 855,350 880,342 900,355 920,362 940,368 960,400 985,445 1010,500 1035,535'
];
const ma20 = [
    '38,817 70,822 90,810 110,785 135,755 155,710 180,665 200,640 220,610 245,568 270,565 300,575 330,610 355,635 380,655 410,695 440,730 465,755 495,785 520,795 540,785 560,765 580,740 605,720 630,705 660,698 690,705 735,705 755,720 775,765 795,830 815,890 835,945 860,1000 880,1050 900,1110 930,1160 950,1205 970,1240 990,1250 1020,1245 1060,1255',
    '0,1243 20,1210 40,1170 60,1120 85,1050 120,975 145,900 175,820 205,740 235,685 265,635 300,580 325,545 345,510 362,480 400,485 430,490 460,485 485,470 510,475 530,490 555,510 580,560 600,590 620,597 645,590 670,560 700,530 720,522 745,525 770,510 800,485 825,474 855,480 880,510 905,565 940,625 975,660 1005,680 1030,710 1045,725 1060,730',
    '20,715 50,700 80,660 110,620 130,590 160,555 190,538 225,538 265,533 290,550 320,575 350,598 375,622 400,627 420,620 445,595 470,580 495,565 520,555 545,535 570,515 600,500 625,465 650,450 680,435 710,420 740,395 770,370 800,352 840,338 880,343 900,355 920,373 945,375 970,390 1000,410 1035,447'
];

// buy, sell and T marks; a lowercase b sits above its day
const marks = [
    'S147,363 B111,878 B195,855 B206,728 B226,685 B222,817 B240,807 B267,930 B291,928 B327,1024 T363,1060 B351,1088 B375,1110 B411,1015 B423,1103 B447,1052 B483,1058 B507,1078 B519,1038 B531,820 T543,882 S555,255 B567,704 B579,642 B615,955 B651,942 B663,1090 B675,1060 B723,1010 B759,1304 B771,1402 B784,1437 B796,1435 b855,1042 b879,1236 S903,1095 b925,1108 S951,995 B967,1393 B979,1390 S987,906 S999,821 B1011,1378 B1023,1350 b1059,1085 S1071,1022',
    'S3,770 S15,730 S27,680 B40,1160 S51,643 S75,418 B243,847 B255,778 B267,717 S279,589 B399,720 T411,645 B423,835 B435,918 S447,373 B472,710 B484,709 B531,880 B543,830 B555,920 B567,950 B615,890 S627,300 B699,542 B711,612 B723,762 B735,758 S759,243 S771,222 B783,708 S795,181 B795,708 B807,708 B819,835 B831,890 B843,945 B855,940 B867,935 B879,920 B903,978 B915,960 B927,965 B939,960 B951,965 B975,1030 B987,998 T999,925 T1011,905 B1023,950 B1035,950 T1047,895 T1059,895 B1059,955 T1071,890',
    'B3,950 B15,950 S27,480 T39,803 T51,744 S63,287 B171,725 B183,704 B195,813 B207,951 B219,951 B243,888 T255,922 S267,450 B303,895 B315,890 B327,883 S339,414 B363,835 B375,844 S387,296 B459,740 B471,803 B495,770 B519,786 S543,256 B567,717 S579,200 B687,575 B699,642 B723,620 B735,672 S771,134 B807,658 B879,535 B891,607 B915,645 B927,645 B939,640 B963,825 B975,828 T985,748 B999,780 B1011,900 B1023,845 B1035,850'
];
const markColors = { B: '#fb432d', S: '#2e86fb', T: '#ff9411' };

function line(panes, color) {
    const points = panes.flatMap((pane, i) => pane.split(' ').map(p => {
        const [x, y] = p.split(',').map(Number);
        return px(x + i * PANE).toFixed(1) + ',' + py(y).toFixed(1);
    }));
    return `<polyline points="${points.join(' ')}" fill="none" stroke="${color}" stroke-width="3" stroke-linejoin="round"/>`;
}

function drawKline() {
    let out = '<rect x="0" y="1" width="1055" height="684" fill="none" stroke="#e2e2e2" stroke-width="2"/>';
    [393, 777, 1161].forEach(y => {
        out += `<path d="M0 ${py(y)}H1056" stroke="#d0d0d0" stroke-dasharray="2 2"/>`;
    });
    out += `<rect x="${px(3120)}" y="${py(436)}" width="28" height="16" fill="#ccd0d6"/>`;
    days.forEach((d, i) => {
        const [high, low] = d.slice(1).split('-').map(Number);
        const color = d[0] === 'r' ? '#c93030' : '#0a960a';
        out += `<path d="M${px(39 + i * 12)} ${py(high)}V${py(low)}" stroke="${color}" stroke-width="2"/>`;
        if (low - high > 30) {
            out += `<path d="M${px(39 + i * 12)} ${py(high + 12)}V${py(low - 6)}" stroke="${color}" stroke-width="3"/>`;
        }
    });
    out += line(ma5, '#222') + line(ma10, '#f5b942') + line(ma20, '#c7157f');

    [['2.078', 39], ['1.991', 161], ['1.903', 343], ['1.816', 516], ['1.728', 683]].forEach(([t, y]) => {
        out += `<text x="3" y="${y}" class="grid-label">${t}</text>`;
    });
    out += '<text x="430" y="38" class="peak-label">2.078-&gt;</text>';
    out += '<text x="289" y="678" class="peak-label">&lt;-1.728</text>';

    let stems = '', badges = '';
    marks.forEach((pane, i) => pane.split(' ').forEach(m => {
        const type = m[0].toUpperCase();
        const [mx, my] = m.slice(1).split(',').map(Number);
        const x = px(mx + i * PANE), y = py(my);
        const dir = type === 'S' || m[0] === 'b' ? 1 : -1;
        const color = markColors[type];
        stems += `<path d="M${x} ${y + dir * 75}V${y + dir * 18}" stroke="${color}" stroke-opacity=".7" stroke-width="3" stroke-dasharray="7 5"/>`;
        stems += `<circle cx="${x}" cy="${y + dir * 101}" r="6" fill="${color}" fill-opacity=".75"/>`;
        badges += `<rect x="${x - 16}" y="${y - 16}" width="32" height="32" rx="6" fill="${color}" fill-opacity=".7" stroke="#fff" stroke-opacity=".7"/>`;
        badges += `<text x="${x}" y="${y + 10}" class="badge">${type}</text>`;
    }));
    document.getElementById('kline').innerHTML = out + stems + badges;
}

const vx = x => x / 1.452 - 12;
const vy = y => y / 3 - 73;
const vol1 = '20,905 35,870 48,855 60,865 80,868 100,875 115,858 133,825 150,850 165,882 185,882 205,890 215,878 230,862 245,868 258,842 268,828 280,850 300,880 320,882 335,885 350,890 365,855 378,820 390,812 400,835 415,855 432,858 440,840 455,858 470,858 485,842 500,838 512,850 525,840 545,815 560,835 575,822 590,840 610,808 625,820 640,855 655,848 675,850 688,868 700,815 710,780 720,768 735,815 750,855 762,882 785,885 800,885 825,885 833,720 842,650 850,608 856,615 862,720 870,820 885,870 900,890 915,870 930,885 950,915 970,928 990,935 1005,912 1025,900 1050,912 1080,905 1110,908 1130,905 1145,880 1160,885 1175,900 1195,925 1225,920 1245,895 1260,880 1290,885 1310,895 1325,908 1350,890 1370,900 1395,892 1420,908 1445,925 1475,928 1500,937 1530,925 1547,935';
const vol2 = '20,912 45,882 65,870 110,870 133,850 160,850 180,870 200,888 240,875 265,848 300,855 325,880 352,890 375,862 410,830 450,855 500,850 520,855 535,830 575,820 590,830 605,818 640,828 688,860 710,820 735,803 745,803 765,850 795,885 825,885 835,800 845,755 865,742 875,733 884,738 892,820 900,865 930,880 960,900 995,925 1025,912 1060,905 1120,905 1150,892 1185,895 1205,920 1225,918 1260,890 1300,890 1340,900 1390,900 1430,912 1460,925 1500,932 1547,930';
const spikes = 'r26,806 g48,840 r113,818 r125,800 g131,803 g246,840 r252,800 g262,822 g292,830 g322,833 g362,805 g368,773 g374,812 r438,803 r467,815 r485,822 g490,815 r525,743 r531,780 r560,753 r589,780 g605,786 g617,803 r659,800 r694,795 g699,722 g705,735 r711,780 r723,775 r740,840 r828,818 r834,220 r840,540 g845,705 g851,768 r857,838 r863,838 r869,875 r880,888 r908,850 r1001,880 r1065,857 r1106,863 g1140,863 g1146,833 r1233,866 g1262,842 g1332,863 r1345,855 g1512,896';

function parse(str) {
    return str.split(' ').map(p => p.split(',').map(Number));
}

function valueAt(points, x) {
    const i = points.findIndex(p => p[0] >= x);
    if (i < 1) return points[i === 0 ? 0 : points.length - 1][1];
    const [x0, y0] = points[i - 1], [x1, y1] = points[i];
    return y0 + (y1 - y0) * (x - x0) / (x1 - x0);
}

function drawVolume() {
    let out = '<rect x="0" y="1" width="1055" height="246" fill="none" stroke="#ccc" stroke-width="1"/>';
    out += '<text x="2" y="44" class="volume-label">31.06亿</text>';
    const average = parse(vol2);
    const bars = days.map((d, i) => {
        const noise = 0.76 + ((i * 37 + i * i * 11) % 17) / 40;
        const x = i * 4 + 2;
        return { x, color: d[0], top: 963 - (963 - valueAt(average, (x + 12) * 1.452)) * noise };
    });
    // the days after the spike trade far below their average
    bars.forEach(b => {
        if (b.x > 561 && b.x < 612) b.top = Math.max(b.top, 882);
    });
    spikes.split(' ').forEach(s => {
        const [x, y] = s.slice(1).split(',').map(Number);
        const bar = bars[Math.min(bars.length - 1, Math.round((vx(x) - 2) / 4))];
        bar.color = s[0];
        bar.top = y;
    });
    bars.forEach(b => {
        const w = b.color === 'r' ? 5 : 3;
        out += `<rect x="${b.x - w / 2}" y="${vy(b.top)}" width="${w}" height="${248 - vy(b.top)}" fill="${b.color === 'r' ? '#cc2e2e' : '#0a960a'}"/>`;
    });
    [[vol1, '#f2c01e'], [vol2, '#d421d4']].forEach(([str, color]) => {
        const points = parse(str).map(([x, y]) => vx(x).toFixed(1) + ',' + vy(y).toFixed(1)).join(' ');
        out += `<polyline points="${points}" fill="none" stroke="${color}" stroke-width="3" stroke-linejoin="round"/>`;
    });
    document.getElementById('volume').innerHTML = out;
}

drawKline();
drawVolume();
```
